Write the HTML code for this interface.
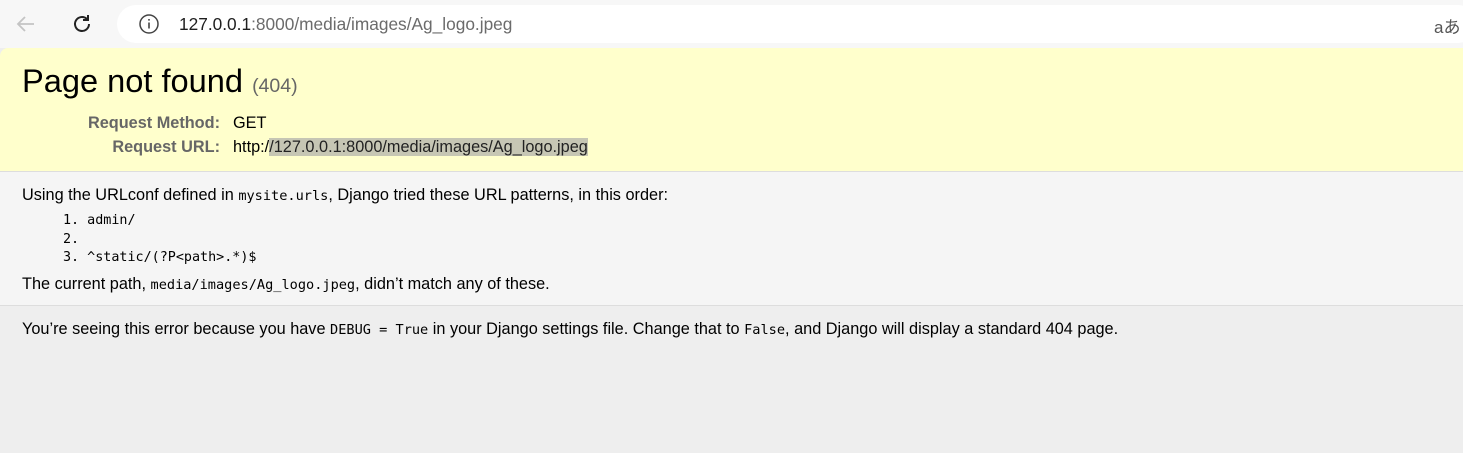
<!DOCTYPE html>
<html><head><meta charset="utf-8"><style>
*{margin:0;padding:0;box-sizing:border-box}
body{width:1463px;height:453px;overflow:hidden;font-family:"Liberation Sans",Arial,sans-serif;background:#eee;position:relative}
.bar{position:absolute;left:0;top:0;width:1463px;height:48px;background:#f7f7f7}
.pill{position:absolute;left:117px;top:5px;width:1360px;height:38px;background:#fff;border-radius:19px}
.url{position:absolute;left:179px;top:14px;font-size:17.3px;color:#1f1f1f}
.url span{color:#6b6b6b}
code{font-family:"DejaVu Sans Mono","Liberation Mono",monospace;font-size:13.6px}
#summary{position:absolute;left:0;top:48px;width:1463px;height:124px;background:#ffc;border-bottom:1px solid #ddd;border-top-left-radius:8px}
h1{position:absolute;left:22px;top:62px;font-size:32.6px;font-weight:normal;color:#000}
h1 span{font-size:19.5px;color:#666}
.lab{position:absolute;width:200px;left:20px;text-align:right;font-weight:bold;color:#666;font-size:16.3px}
.val{position:absolute;left:233px;font-size:16.3px;color:#000}
.hl{background:#c6c6b4;color:#222}
#info{position:absolute;left:0;top:172px;width:1463px;height:134px;background:#f5f5f5;border-bottom:1px solid #ddd}
.t{position:absolute;left:22px;font-size:16.3px;color:#000}
.li{position:absolute;left:63px;font-family:"DejaVu Sans Mono",monospace;font-size:13.4px;color:#000}
</style></head><body>
<div class="bar"></div>
<svg style="position:absolute;left:14px;top:12px" width="24" height="24" viewBox="0 0 24 24"><path d="M20 12H5M11 5l-7 7 7 7" fill="none" stroke="#c4c4c4" stroke-width="1.8"/></svg>
<svg style="position:absolute;left:70px;top:12px" width="24" height="24" viewBox="0 0 24 24"><path d="M19 12a7 7 0 1 1-2.1-5" fill="none" stroke="#222" stroke-width="2"/><path d="M18 3v5h-5" fill="none" stroke="#222" stroke-width="2"/></svg>
<div class="pill"></div>
<svg style="position:absolute;left:138px;top:13px" width="22" height="22" viewBox="0 0 22 22"><circle cx="11" cy="11" r="9" fill="none" stroke="#444" stroke-width="1.5"/><path d="M11 9.5v6M11 6v1.6" stroke="#444" stroke-width="1.6"/></svg>
<div class="url">127.0.0.1<span>:8000/media/images/Ag_logo.jpeg</span></div>
<div style="position:absolute;left:1434px;top:13px;font-size:17px;color:#555;font-family:'Liberation Sans','Noto Sans CJK JP',sans-serif">aあ</div>
<div id="summary"></div>
<h1>Page not found <span>(404)</span></h1>
<div class="lab" style="top:114px">Request Method:</div><div class="val" style="top:114px">GET</div>
<div class="lab" style="top:138px">Request URL:</div><div class="val" style="top:138px">http:/<span class="hl">/127.0.0.1:8000/media/images/Ag_logo.jpeg</span></div>
<div id="info"></div>
<div class="t" style="top:186px">Using the URLconf defined in <code>mysite.urls</code>, Django tried these URL patterns, in this order:</div>
<div class="li" style="top:213px">1. admin/</div>
<div class="li" style="top:232px">2.</div>
<div class="li" style="top:250px">3. ^static/(?P&lt;path&gt;.*)$</div>
<div class="t" style="top:275px">The current path, <code>media/images/Ag_logo.jpeg</code>, didn’t match any of these.</div>
<div class="t" style="top:320px">You’re seeing this error because you have <code>DEBUG = True</code> in your Django settings file. Change that to <code>False</code>, and Django will display a standard 404 page.</div>
</body></html>
